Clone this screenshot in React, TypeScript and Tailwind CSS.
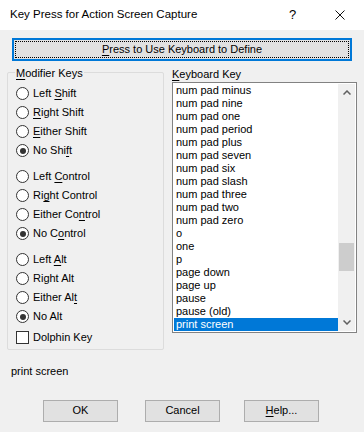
import React from "react";

const keys = [
  "num pad minus",
  "num pad nine",
  "num pad one",
  "num pad period",
  "num pad plus",
  "num pad seven",
  "num pad six",
  "num pad slash",
  "num pad three",
  "num pad two",
  "num pad zero",
  "o",
  "one",
  "p",
  "page down",
  "page up",
  "pause",
  "pause (old)",
  "print screen",
];

type Opt = { pre: string; u?: string; post?: string; checked?: boolean; gap?: boolean };

const options: Opt[] = [
  { pre: "Left ", u: "S", post: "hift" },
  { pre: "", u: "R", post: "ight Shift" },
  { pre: "", u: "E", post: "ither Shift" },
  { pre: "No Shi", u: "f", post: "t", checked: true },
  { pre: "Left ", u: "C", post: "ontrol", gap: true },
  { pre: "Ri", u: "g", post: "ht Control" },
  { pre: "Either Co", u: "n", post: "trol" },
  { pre: "No C", u: "o", post: "ntrol", checked: true },
  { pre: "Left ", u: "A", post: "lt", gap: true },
  { pre: "Right Alt" },
  { pre: "Either Al", u: "t", post: "" },
  { pre: "No Alt", checked: true },
];

const Radio = ({ opt }: { opt: Opt }) => (
  <div className={`flex items-center h-[19px] ${opt.gap ? "mt-[7px]" : ""}`}>
    <span className="w-[13px] h-[13px] rounded-full border border-[#333333] bg-white flex items-center justify-center">
      {opt.checked && <span className="w-[6px] h-[6px] rounded-full bg-[#333333]" />}
    </span>
    <span className="ml-[4px] text-black">
      {opt.pre}
      {opt.u && <span className="underline underline-offset-2">{opt.u}</span>}
      {opt.post}
    </span>
  </div>
);

const Btn = ({ children, className = "" }: { children: React.ReactNode; className?: string }) => (
  <div
    className={`w-[75px] h-[22px] border border-[#adadad] bg-[#e1e1e1] flex items-center justify-center text-black ${className}`}
  >
    {children}
  </div>
);

export default function App() {
  return (
    <div className="w-[364px] h-[432px] bg-[#f0f0f0] font-['Liberation_Sans',Arial,sans-serif] text-[11px] text-black flex flex-col overflow-hidden">
      <div className="h-[30px] bg-white flex items-center pl-[10px] shrink-0">
        <span className="text-[11.5px] flex-1">Key Press for Action Screen Capture</span>
        <span className="text-[13px] w-[10px] mr-[36px]">?</span>
        <svg width="10" height="10" viewBox="0 0 10 10" className="mr-[19px]">
          <path d="M0.5 0.5 L9.5 9.5 M9.5 0.5 L0.5 9.5" stroke="#111" strokeWidth="1" />
        </svg>
      </div>

      <div className="px-[12px] mt-[8px]">
        <div className="h-[23px] border-2 border-[#0078d7] bg-[#e1e1e1] p-[1px]">
          <div className="h-full border border-dotted border-black flex items-center justify-center">
            <span>
              <span className="underline underline-offset-2">P</span>ress to Use Keyboard to Define
            </span>
          </div>
        </div>
      </div>

      <div className="flex mt-[5px] pl-[7px]">
        <div className="w-[157px] h-[278px] mt-[6px] border border-[#dcdcdc] rounded-[2px] relative pl-[8px] pt-[11px]">
          <span className="absolute left-[7px] -top-[8px] bg-[#f0f0f0] px-[1px]">
            <span className="underline underline-offset-2">M</span>odifier Keys
          </span>
          {options.map((o, i) => (
            <Radio key={i} opt={o} />
          ))}
          <div className="flex items-center h-[19px] mt-[2px]">
            <span className="w-[13px] h-[13px] border border-[#333333] bg-white" />
            <span className="ml-[4px]">Dolphin Key</span>
          </div>
        </div>

        <div className="ml-[8px] w-[185px] flex flex-col">
          <div className="h-[16px] flex items-center">
            <span>
              <span className="underline underline-offset-2">K</span>eyboard Key
            </span>
          </div>
          <div className="border border-[#828282] bg-white flex p-[1px]">
            <div className="flex-1 flex flex-col">
              {keys.map((k) => (
                <div
                  key={k}
                  className={`h-[13px] leading-[13px] pl-[2px] ${k === "print screen" ? "bg-[#0078d7] text-white" : ""}`}
                >
                  {k}
                </div>
              ))}
            </div>
            <div className="w-[17px] bg-[#f0f0f0] flex flex-col">
              <div className="h-[17px] flex items-center justify-center">
                <svg width="8" height="5" viewBox="0 0 8 5">
                  <path d="M0.5 4.5 L4 1 L7.5 4.5" stroke="#606060" strokeWidth="1.5" fill="none" />
                </svg>
              </div>
              <div className="flex-1">
                <div className="mt-[142px] mx-[1px] h-[28px] bg-[#cdcdcd]" />
              </div>
              <div className="h-[17px] flex items-center justify-center">
                <svg width="8" height="5" viewBox="0 0 8 5">
                  <path d="M0.5 0.5 L4 4 L7.5 0.5" stroke="#606060" strokeWidth="1.5" fill="none" />
                </svg>
              </div>
            </div>
          </div>
        </div>
      </div>

      <div className="pl-[11px] mt-[13px]">print screen</div>

      <div className="flex pl-[43px] mt-[20px]">
        <Btn>OK</Btn>
        <Btn className="ml-[27px]">Cancel</Btn>
        <Btn className="ml-[24px]">
          <span>
            <span className="underline underline-offset-2">H</span>elp...
          </span>
        </Btn>
      </div>
    </div>
  );
}
